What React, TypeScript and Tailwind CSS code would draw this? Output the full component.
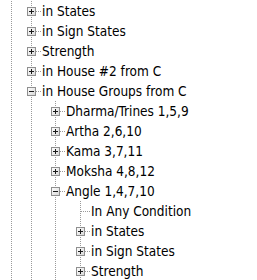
import React from "react";

type Row = { level: 1 | 2 | 3; kind: "plus" | "minus" | "leaf"; text: string };

const rows: Row[] = [
  { level: 1, kind: "plus", text: "in States" },
  { level: 1, kind: "plus", text: "in Sign States" },
  { level: 1, kind: "plus", text: "Strength" },
  { level: 1, kind: "plus", text: "in House #2 from C" },
  { level: 1, kind: "minus", text: "in House Groups from C" },
  { level: 2, kind: "plus", text: "Dharma/Trines 1,5,9" },
  { level: 2, kind: "plus", text: "Artha 2,6,10" },
  { level: 2, kind: "plus", text: "Kama 3,7,11" },
  { level: 2, kind: "plus", text: "Moksha 4,8,12" },
  { level: 2, kind: "minus", text: "Angle 1,4,7,10" },
  { level: 3, kind: "leaf", text: "In Any Condition" },
  { level: 3, kind: "plus", text: "in States" },
  { level: 3, kind: "plus", text: "in Sign States" },
  { level: 3, kind: "plus", text: "Strength" },
];

const cols = [11, 31, 55, 80];
const DOT = "#9a9a9a";

function VLine({ x, y1, y2 }: { x: number; y1: number; y2: number }) {
  return (
    <line
      x1={x + 0.5}
      y1={y1}
      x2={x + 0.5}
      y2={y2}
      stroke={DOT}
      strokeWidth={1}
      strokeDasharray="1 1"
      shapeRendering="crispEdges"
    />
  );
}

function HLine({ x1, x2, y }: { x1: number; x2: number; y: number }) {
  return (
    <line
      x1={x1}
      y1={y + 0.5}
      x2={x2}
      y2={y + 0.5}
      stroke={DOT}
      strokeWidth={1}
      strokeDasharray="1 1"
      shapeRendering="crispEdges"
    />
  );
}

function Guides({ row }: { row: Row }) {
  const c = cols[row.level];
  const textX = c + 11;
  const w = textX - 1;
  const cy = 10;
  const hasBox = row.kind !== "leaf";
  const verticals: React.ReactNode[] = [];
  for (let i = 0; i < row.level; i++) {
    verticals.push(<VLine key={"a" + i} x={cols[i]} y1={0} y2={20} />);
  }
  return (
    <svg width={w} height={20} className="shrink-0 block">
      <defs>
        <linearGradient id="boxg" x1="0" y1="0" x2="1" y2="1">
          <stop offset="0" stopColor="#ffffff" />
          <stop offset="1" stopColor="#d6d6d6" />
        </linearGradient>
      </defs>
      {verticals}
      <VLine x={c} y1={0} y2={20} />
      <HLine x1={c + 1} x2={textX - 1} y={cy} />
      {row.kind === "minus" && <VLine x={cols[row.level + 1]} y1={15} y2={20} />}
      {hasBox && (
        <g shapeRendering="crispEdges">
          <rect x={c - 4 + 0.5} y={cy - 4 + 0.5} width={8} height={8} fill="url(#boxg)" stroke="#8f8f8f" />
          <line x1={c - 2} y1={cy + 0.5} x2={c + 3} y2={cy + 0.5} stroke="#1a1a1a" />
          {row.kind === "plus" && <line x1={c + 0.5} y1={cy - 2} x2={c + 0.5} y2={cy + 3} stroke="#1a1a1a" />}
        </g>
      )}
    </svg>
  );
}

export default function App() {
  return (
    <div className="w-[257px] h-[280px] overflow-hidden bg-white pt-[1px]">
      {rows.map((r, i) => (
        <div key={i} className="flex h-[20px] items-center">
          <Guides row={r} />
          <span
            className="whitespace-nowrap text-[13.5px] leading-[20px] text-black pl-[1px]"
            style={{ fontFamily: '"DejaVu Sans", sans-serif', fontStretch: "condensed" }}
          >
            {r.text}
          </span>
        </div>
      ))}
    </div>
  );
}
